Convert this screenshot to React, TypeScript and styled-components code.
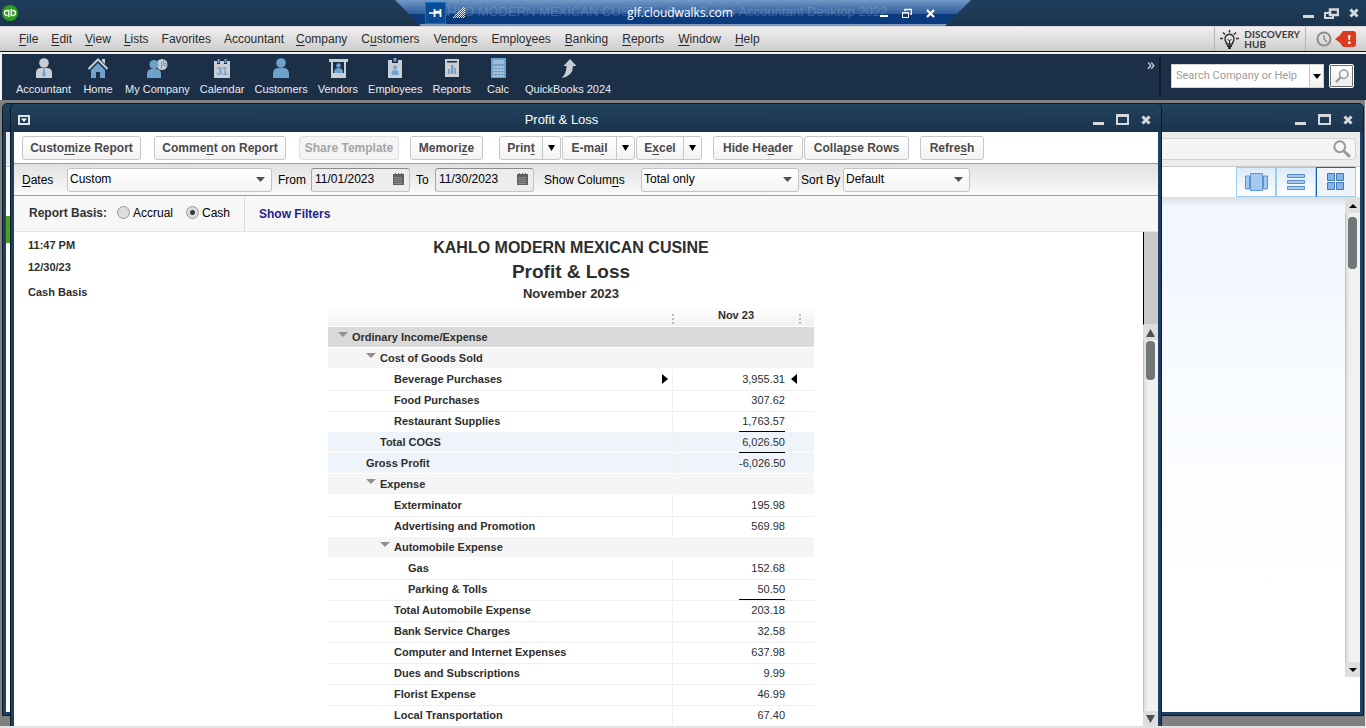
import React from "react";
import styled, { createGlobalStyle, css } from "styled-components";

const sans = '"Liberation Sans", Arial, sans-serif';
const ui = '"Open Sans", "Noto Sans", sans-serif';
const navy = "#1b2f47";
const frame = "#1f4064";
const titleGradient = "linear-gradient(#21425f, #1b344c)";

const GlobalStyle = createGlobalStyle`
  *, *::before, *::after { box-sizing: border-box; }
  body { margin: 0; background: #e3e3e3; font-family: ${sans}; font-size: 12px; color: #222; overflow: hidden; }
  button, input, select { font-family: inherit; font-size: inherit; color: inherit; margin: 0; }
  button { background: none; border: 0; padding: 0; cursor: pointer; }
  svg { display: block; flex: none; }
  u { text-decoration-skip-ink: none; text-underline-offset: 2px; text-decoration-thickness: 1px; }
`;

/* ---------- shell ---------- */

const Shell = styled.div`
  display: flex;
  flex-direction: column;
  height: 100vh;
  white-space: nowrap;
`;

const AppTitleBar = styled.header`
  position: relative;
  display: flex;
  align-items: center;
  justify-content: space-between;
  height: 26px;
  padding: 0 7px 0 2px;
  background: linear-gradient(#1f3f5f, #1b334b);
`;

const Controls = styled.div<{ $gap?: number }>`
  display: flex;
  align-items: center;
  gap: ${(p) => p.$gap ?? 10}px;
`;

const IconButton = styled.button`
  display: grid;
  place-items: center;
`;

const RemoteBar = styled.div`
  position: absolute;
  top: 0;
  left: 50%;
  width: 576px;
  height: 26px;
  margin-left: -288px;
  display: grid;
  grid-template-columns: 1fr auto 1fr;
  align-items: center;
  padding: 0 36px 0 30px;
  clip-path: polygon(0 0, 100% 0, calc(100% - 26px) 100%, 26px 100%);
  background: linear-gradient(#7299c8, #2d5c98 14px, #0c3b7c 14px, #0a3a80 24px, #8299bd 24px);
  color: #fff;
`;

const GhostTitle = styled.span`
  position: absolute;
  left: 35px;
  top: 2px;
  font-size: 13px;
  line-height: 20px;
  color: rgba(160, 190, 225, 0.32);
`;

const RemoteHost = styled.span`
  position: relative;
  font-family: ${ui};
  font-size: 12px;
  line-height: 24px;
`;

const RemoteGroup = styled.div<{ $end?: boolean; $gap: number }>`
  position: relative;
  display: flex;
  align-items: center;
  gap: ${(p) => p.$gap}px;
  justify-content: ${(p) => (p.$end ? "flex-end" : "flex-start")};
`;

const PinButton = styled(IconButton)`
  width: 21px;
  height: 22px;
  background: #0b4c97;
  border: 1px solid #1e6cc0;
`;

const MenuBar = styled.nav`
  display: flex;
  justify-content: space-between;
  height: 26px;
  background: linear-gradient(#f0f0f0, #cdcdcd);
  border-top: 1px solid #d8d8d8;
  border-bottom: 1px solid #111;
`;

const MenuList = styled.div`
  display: flex;
  gap: 12px;
  margin-left: 19px;
  line-height: 24px;
  color: #2b2b2b;
`;

const MenuGroup = styled.div<{ $gap: number }>`
  display: flex;
  gap: ${(p) => p.$gap}px;
`;

const MenuEnd = styled.div`
  display: flex;
  padding-right: 10px;
`;

const DiscoveryHub = styled.button`
  display: flex;
  align-items: center;
  gap: 5px;
  padding: 0 5px;
  border-left: 1px solid #b4b4b4;
  border-right: 1px solid #b4b4b4;
  font-family: Lato, ${sans};
  font-weight: 700;
  font-size: 10px;
  line-height: 10px;
  text-align: left;
  color: #3c3c3c;
`;

const Alerts = styled.div`
  display: flex;
  align-items: center;
  gap: 3px;
  padding-left: 10px;
`;

const IconBar = styled.div`
  display: flex;
  justify-content: space-between;
  height: 48px;
  background: ${navy};
  border-top: 2px solid #f4f4f4;
  border-left: 2px solid #f4f4f4;
`;

const Shortcuts = styled.div`
  display: flex;
  gap: 10px;
  margin-left: 14px;
`;

const Shortcut = styled.button`
  display: flex;
  flex-direction: column;
  align-items: center;
  gap: 3px;
  min-width: 34px;
  padding-top: 3px;
  font-size: 11px;
  line-height: 14px;
  color: #e8ecf0;
`;

const IconBarEnd = styled.div`
  display: flex;
  padding: 3px 12px 3px 0;
`;

const More = styled.button`
  align-self: flex-start;
  padding: 0 4px 0 0;
  font-family: ${ui};
  font-size: 16px;
  line-height: 14px;
  color: #dfe3e8;
`;

const SearchZone = styled.form`
  display: flex;
  align-items: center;
  gap: 5px;
  padding: 0 0 2px 10px;
  border-left: 2px solid #0e1c2e;
`;

const SearchBox = styled.div`
  display: flex;
  width: 153px;
  height: 24px;
  background: #fff;
  border: 1px solid #d6d2c8;
`;

const SearchInput = styled.input`
  flex: 1;
  min-width: 0;
  padding: 0 4px 2px;
  border: 0;
  background: none;
  font-family: Roboto, ${sans};
  font-size: 11px;
  &::placeholder { color: #9c9c9c; opacity: 1; }
`;

const SearchDrop = styled(IconButton)`
  width: 14px;
  border-left: 1px solid #c4c4c4;
  background: linear-gradient(#fff, #f1f1f1);
`;

const SearchGo = styled(IconButton)`
  width: 25px;
  height: 24px;
  background: linear-gradient(#fff, #ececec);
  border: 1px solid #fff;
  border-radius: 2px;
  box-shadow: inset 0 0 0 1px #6c6c6c;
`;

/* ---------- windows ---------- */

const Desktop = styled.main`
  position: relative;
  flex: 1;
  min-height: 0;
  background: #808080;
  border-right: 1px solid #e3e3e3;
  margin-bottom: 2px;
  overflow: hidden;
`;

const windowBase = css`
  position: absolute;
  top: 3px;
  display: flex;
  flex-direction: column;
  border: 1px solid #0b1a2b;
  border-radius: 5px 5px 0 0;
  background: ${frame};
`;

const BackWindow = styled.section`
  ${windowBase}
  left: 2px;
  right: 1px;
  bottom: 10px;
`;

const FrontWindow = styled.section`
  ${windowBase}
  left: 10px;
  right: 203px;
  bottom: 0;
  border-bottom: 0;
`;

const WindowTitle = styled.header`
  display: flex;
  align-items: center;
  height: 28px;
  padding: 3px 10px 0 7px;
  border-radius: 5px 5px 0 0;
  background: ${titleGradient};
  color: #fff;
  font-size: 13px;
`;

const WindowName = styled.span`
  flex: 1;
  text-align: center;
`;

const WindowBody = styled.div<{ $bottom?: number }>`
  display: flex;
  flex: 1;
  flex-direction: column;
  min-height: 0;
  margin: 0 3px ${(p) => p.$bottom ?? 0}px;
  background: #fff;
`;

/* back window */

const FindRow = styled.div`
  height: 35px;
  padding: 6px 4px;
  background: #ececec;
  border-bottom: 1px solid #c9c9c9;
`;

const FindBox = styled.label`
  display: flex;
  align-items: center;
  height: 22px;
  padding-right: 4px;
  background: #f5f5f5;
  border: 1px solid #d2d2d2;
  border-radius: 4px;
`;

const FindInput = styled.input`
  flex: 1;
  border: 0;
  background: none;
  outline: 0;
`;

const ViewRow = styled.div`
  display: flex;
  justify-content: flex-end;
  height: 30px;
  padding-right: 4px;
`;

const ViewButton = styled(IconButton)<{ $on?: boolean }>`
  width: 40px;
  border: 1px solid #9ccbee;
  background: linear-gradient(#dcebf9, #fdfeff);
  ${(p) =>
    p.$on &&
    css`
      border-left: 1px solid #1565b4;
      border-top: 1px solid #1565b4;
      background: #eef3f9;
    `}
`;

const BackContent = styled.div`
  display: flex;
  flex: 1;
  min-height: 0;
  background: linear-gradient(#dadde2, #f3f7fe 10px, #f3f7fe 60px, #f8fbff 190px, #fff 400px);
`;

const SideRail = styled.div`
  width: 40px;
  background: #fff;
  padding-top: 19px;
`;

const ActiveMarker = styled.div`
  height: 27px;
  background: #4da019;
`;

const BackScroll = styled.div`
  display: flex;
  flex-direction: column;
  width: 15px;
  margin: 1px 0 35px auto;
`;

const Track = styled.div`
  flex: 1;
  padding: 4px 2px;
  background: linear-gradient(90deg, #dcdcdc, #f1f1f1 4px);
  border-left: 1px solid #c2c2c2;
`;

const Thumb = styled.div<{ $h: number }>`
  height: ${(p) => p.$h}px;
  width: 9px;
  background: #707776;
  border-radius: 4px;
`;

const ScrollButton = styled(IconButton)`
  height: 15px;
  background: #dedede;
`;

/* report window */

const ButtonRow = styled.div`
  display: flex;
  align-items: center;
  height: 32px;
  padding-left: 8px;
  border-bottom: 1px solid #9c9c9c;
`;

const ButtonGroup = styled.div<{ $tight?: boolean }>`
  display: flex;
  gap: ${(p) => (p.$tight ? 1 : 13)}px;
  margin-right: 11px;
`;

const SplitGroup = styled(ButtonGroup)`
  margin-left: 5px;
`;

const buttonFace = css`
  height: 24px;
  border: 1px solid #c6c6c6;
  border-radius: 3px;
  background: linear-gradient(#fff, #f2f2f2);
  font-weight: 700;
  color: #4a4a4a;
`;

const ToolButton = styled.button<{ $w: number }>`
  ${buttonFace}
  width: ${(p) => p.$w}px;
  &:disabled { color: #a6a6a6; border-color: #e0e0e0; background: #f4f4f4; }
`;

const SplitButton = styled.div<{ $w: number }>`
  ${buttonFace}
  display: flex;
  width: ${(p) => p.$w}px;
`;

const SplitMain = styled.button`
  flex: 1;
  font-weight: 700;
`;

const SplitDrop = styled(IconButton)`
  width: 18px;
  border-left: 1px solid #c6c6c6;
`;

const FilterRow = styled.form`
  display: flex;
  align-items: center;
  height: 32px;
  padding-left: 8px;
  background: linear-gradient(#e2e2e2, #f9f9f9);
  border-bottom: 1px solid #9c9c9c;
  color: #000;
`;

const FieldLabel = styled.label<{ $w: number; $before?: number }>`
  width: ${(p) => p.$w}px;
  margin-left: ${(p) => p.$before ?? 0}px;
`;

const SelectBox = styled.div<{ $w: number }>`
  position: relative;
  width: ${(p) => p.$w}px;
  height: 24px;
  svg { position: absolute; right: 7px; top: 9px; pointer-events: none; }
`;

const Select = styled.select`
  appearance: none;
  width: 100%;
  height: 100%;
  padding: 0 20px 2px 2px;
  border: 1px solid #c3c3c3;
  border-radius: 3px;
  background: linear-gradient(#fff, #f4f4f4);
`;

const DateBox = styled.div`
  display: flex;
  align-items: center;
  width: 99px;
  height: 24px;
  padding: 0 5px 2px 0;
  border: 1px solid #c3c3c3;
  border-top-color: #8c8c8c;
  border-left-color: #a5a5a5;
  border-radius: 3px;
  background: #ededed;
`;

const DateInput = styled.input`
  flex: 1;
  min-width: 0;
  padding: 0 3px;
  border: 0;
  background: none;
`;

const BasisRow = styled.div`
  display: flex;
  height: 36px;
  background: #f7f7f7;
  border-bottom: 1px solid #e4e4e4;
`;

const Basis = styled.fieldset`
  display: flex;
  align-items: center;
  width: 231px;
  margin: 0;
  padding: 0 0 2px 15px;
  border: 0;
  border-right: 1px solid #dcdcdc;
  color: #000;
`;

const BasisName = styled.span`
  width: 88px;
  font-weight: 700;
  color: #333;
`;

const RadioLabel = styled.label`
  display: flex;
  align-items: center;
  gap: 3px;
  margin-right: 13px;
`;

const Radio = styled.input`
  appearance: none;
  width: 13px;
  height: 13px;
  margin: 0;
  border: 1px solid #9b9b9b;
  border-radius: 50%;
  background: #dcdcdc;
  &:checked { background: radial-gradient(#3a3a3a 2px, #dcdcdc 3px); }
`;

const FilterLink = styled.a`
  margin-left: 14px;
  line-height: 36px;
  font-weight: 700;
  color: #1d1f8c;
  text-decoration: none;
`;

const ReportArea = styled.div`
  display: flex;
  flex: 1;
  min-height: 0;
`;

const ReportView = styled.div`
  display: flex;
  flex: 1;
  min-height: 0;
  overflow: hidden;
  color: #2e2e2e;
`;

const Meta = styled.div`
  width: 314px;
  flex: none;
  padding: 2px 14px;
  font-size: 11px;
  font-weight: 700;
  line-height: 22px;
`;

const MetaLine = styled.div`
  &:last-child { margin-top: 3px; }
`;

const Report = styled.article`
  width: 486px;
  padding-top: 5px;
  text-align: center;
`;

const Heading = styled.h1<{ $size: number; $line: number }>`
  margin: 0;
  font-size: ${(p) => p.$size}px;
  line-height: ${(p) => p.$line}px;
  font-weight: 700;
`;

const Ledger = styled.table`
  width: 100%;
  margin-top: 3px;
  border-collapse: separate;
  border-spacing: 0;
  table-layout: fixed;
  font-size: 11px;
`;

const HeadCell = styled.th`
  position: relative;
  height: 21px;
  padding: 0 15px 3px 0;
  background: linear-gradient(#fff, #f1f1f1);
  border-bottom: 1px solid #fff;
`;

const Grip = styled.i<{ $right: number }>`
  position: absolute;
  z-index: 1;
  right: ${(p) => p.$right}px;
  bottom: 2px;
  width: 2px;
  height: 10px;
  background: repeating-linear-gradient(#bdbdbd 0 2px, transparent 2px 4px);
`;

type Tone = "section" | "group" | "total" | "plain";

const fills: Record<Tone, string> = {
  section: "#dadada",
  group: "#f5f5f5",
  total: "#eef4f9",
  plain: "#ffffff",
};

const Row = styled.tr<{ $tone: Tone; $divided: boolean }>`
  > * {
    height: 21px;
    padding: 0;
    background: ${(p) => fills[p.$tone]};
    background-clip: padding-box;
    border-bottom: 1px solid #fff;
    ${(p) =>
      p.$divided &&
      css`
        background-image: linear-gradient(#efefef 1px, transparent 1px);
      `}
  }
`;

const NameCell = styled.th<{ $level: number; $line: boolean }>`
  position: relative;
  text-align: left;
  text-indent: ${(p) => 24 + 14 * p.$level}px;
  border-right: ${(p) => (p.$line ? "1px solid #f0f0f0" : "0")};
`;

const ToggleButton = styled(IconButton)<{ $level: number }>`
  position: absolute;
  left: ${(p) => 10 + 14 * p.$level}px;
  top: 5px;
`;

const ValueCell = styled.td`
  position: relative;
  text-align: right;
`;

const Amount = styled.span<{ $rule?: boolean }>`
  display: block;
  width: 46px;
  height: 21px;
  margin: 0 29px -1px auto;
  line-height: 20px;
  border-bottom: ${(p) => (p.$rule ? "1px solid #000" : "0")};
`;

const Marker = styled.span<{ $right: number }>`
  position: absolute;
  right: ${(p) => p.$right}px;
  top: 5px;
`;

const ReportScroll = styled.div`
  display: flex;
  flex-direction: column;
  width: 15px;
`;

const ScrollCap = styled.div`
  height: 93px;
  background: #c9c9c9;
  border-left: 1px solid #000;
  border-bottom: 1px solid #ddd;
`;

const ReportTrack = styled(Track)`
  padding-top: 1px;
`;

/* ---------- drawings ---------- */

const light = "#c9ced5";
const blue = "#6fa1cd";

const icons: Record<string, React.ReactNode> = {
  Accountant: (
    <>
      <circle cx="11" cy="6" r="4.800" fill={light} />
      <path d="M3 21v-5q0-5 5-5h6q5 0 5 5v5z" fill={light} />
      <path d="M10 11h2l-.4 2 1.200 5-1.800 2-1.800-2 1.200-5z" fill={blue} />
    </>
  ),
  Home: (
    <>
      <path d="M4 13l7-7 7 7v8h-5v-6H9v6H4z" fill={blue} />
      <path d="M1.500 12L11 2.500 20.500 12" fill="none" stroke={light} strokeWidth="2" />
      <path d="M15 2h3v5l-3-3z" fill={light} />
    </>
  ),
  "My Company": (
    <>
      <circle cx="16" cy="7.500" r="5.500" fill={light} />
      <g fill="none" stroke={blue} strokeWidth="1.200">
        <path d="M15.500 4.500v7M17.500 3v6" />
        <circle cx="19" cy="7.500" r="1.500" />
      </g>
      <circle cx="8" cy="7.500" r="4.500" fill={blue} />
      <path d="M1 21v-4q0-5 5-5h4q5 0 5 5v4z" fill={blue} />
    </>
  ),
  Calendar: (
    <>
      <path d="M3 4h3v3h3V4h4v3h3V4h3v17H3z" fill={light} />
      <path d="M6.500 2h2v4h-2zM13.500 2h2v4h-2z" fill={blue} />
      <text x="11" y="18" textAnchor="middle" fontSize="10" fontWeight="700" fontFamily="Liberation Sans" fill={blue}>31</text>
    </>
  ),
  Customers: (
    <>
      <circle cx="11" cy="6" r="4.800" fill={blue} />
      <path d="M3 21v-4q0-6 5-6h6q5 0 5 6v4z" fill={blue} />
    </>
  ),
  Vendors: (
    <>
      <path d="M2 2h19v3h-2v16H4V5H2z" fill={light} />
      <path d="M6 5h11v11H6z" fill={navy} />
      <circle cx="11.500" cy="8.500" r="2.300" fill={blue} />
      <path d="M7 16q0-5 4.500-5t4.500 5z" fill={blue} />
    </>
  ),
  Employees: (
    <>
      <path d="M4 3h14v18H4z" fill={light} />
      <path d="M8 2h6v4H8z" fill={navy} />
      <path d="M9.500 1h3v3.500h-3z" fill={blue} />
      <circle cx="11" cy="10.500" r="2" fill={blue} />
      <path d="M7.500 18v-2q0-3 3.500-3t3.500 3v2z" fill={blue} />
    </>
  ),
  Reports: (
    <>
      <path d="M4 2h14v18H4z" fill={light} />
      <path d="M6 4h10v1.500H6z" fill={navy} />
      <path d="M7 12h2v5H7zM10 8h2.500v9H10zM13.500 11H15v6h-1.500z" fill={blue} />
    </>
  ),
  Calc: (
    <>
      <path d="M4 1h15v20H4z" fill={blue} />
      <path d="M6 3h11v4H6z" fill="#9fbdd9" />
      <path d="M6 10h11M6 13h11M6 16h11M6 19h11" stroke={light} strokeWidth="1.500" strokeDasharray="2.500 .7" />
    </>
  ),
  "QuickBooks 2024": (
    <path d="M13 2l6.500 7H16q0 10-11.500 12 5-4 5-12H6.500z" fill={light} />
  ),
};

const ShortcutIcon = ({ name }: { name: string }) => (
  <svg width="22" height="22" viewBox="0 0 22 22">{icons[name]}</svg>
);

const MinIcon = () => (
  <svg width="11" height="12"><path d="M0 8h11v3H0z" fill="#d5d9dd" /></svg>
);
const MaxIcon = () => (
  <svg width="13" height="11"><path d="M1 2h11v8H1z" fill="none" stroke="#d5d9dd" strokeWidth="2" /><path d="M0 0h13v3H0z" fill="#d5d9dd" /></svg>
);
const RestoreIcon = () => (
  <svg width="15" height="11" fill="none" stroke="#d5d9dd" strokeWidth="2"><path d="M6 1.500h8V7H6z" strokeWidth="2.500" /><path d="M6 5H1v5h8V8" /></svg>
);
const CloseIcon = () => (
  <svg width="10" height="10"><path d="M1.500 1.500l7 7M8.500 1.500l-7 7" stroke="#d5d9dd" strokeWidth="3" /></svg>
);
const SmallRestore = () => (
  <svg width="10" height="10" fill="none" stroke="#fff"><path d="M3 3V1.500h6.500V6H8" strokeWidth="1.500" /><path d="M.5 4.500h6v5h-6zM.5 5h6" /></svg>
);
const Caret = ({ w = 9, h = 5, up = false, color = "#000" }) => (
  <svg width={w} height={h}><path d={up ? `M0 ${h}h${w}L${w / 2} 0z` : `M0 0h${w}L${w / 2} ${h}z`} fill={color} /></svg>
);

const QbLogo = () => (
  <svg width="16" height="16" viewBox="0 0 16 16">
    <circle cx="8" cy="8" r="8" fill="#2ca01c" />
    <g fill="none" stroke="#fff" strokeWidth="1.300">
      <path d="M6.800 12V5.500H5a2.300 2.300 0 0 0 0 5h.7M9.200 4v6.500H11a2.300 2.300 0 0 0 0-5h-.7" />
    </g>
  </svg>
);

const PinIcon = () => (
  <svg width="13" height="10"><path d="M0 5h5M5.500 1v8M6 5h6M11.500 1v8M6 3.500h5" stroke="#fff" strokeWidth="1.700" /></svg>
);

const SignalIcon = () => (
  <svg width="12" height="12" stroke="#dfe8f4" fill="none" strokeDasharray="1 1">
    <path d="M10 .5h2M9 1.500h3M8 2.500h4M7 3.500h5M6 4.500h6M5 5.500h7M4 6.500h8M3 7.500h9M2 8.500h10M1 9.500h11M0 10.500h12" />
  </svg>
);

const BulbIcon = () => (
  <svg width="19" height="19" viewBox="0 0 19 19" fill="none" stroke="#333" strokeWidth="1.500">
    <path d="M6.500 14q0-2-1.200-3.200A4.600 4.600 0 1 1 13.700 10.800Q12.500 12 12.500 14z" />
    <path d="M7 16h5M8 18h3" strokeWidth="2" />
    <path d="M9.500 14v-4M7.500 9l2 2 2-2" strokeWidth="1" />
    <path d="M9.500 0v2.500M3 2.500l2 2M16 2.500l-2 2M0 8.500h3M16 8.500h3" />
  </svg>
);

const ClockIcon = () => (
  <svg width="16" height="16" fill="none" stroke="#8c8c8c"><circle cx="8" cy="8" r="6.500" strokeWidth="2" /><path d="M8 4v4l3 3" strokeWidth="1.500" /></svg>
);

const AlertIcon = () => (
  <svg width="21" height="16"><path d="M0 8q5-3 8-8h10q3 0 3 3v10q0 3-3 3H8Q5 11 0 8z" fill="#dc3b1f" /><path d="M13 4h2.500l-.5 5h-1.500zM13 10.500h2.500V13H13z" fill="#fff" /></svg>
);

const Lens = ({ size = 16, flip = false, color = "#9a9a9a" }) => (
  <svg width={size} height={size} viewBox="0 0 16 16" fill="none" stroke={color}>
    <g transform={flip ? "matrix(-1 0 0 1 16 0)" : undefined}>
      <circle cx="6" cy="6" r="4.800" strokeWidth="1.800" />
      <path d="M9.500 9.500l5.500 5.500" strokeWidth="2.600" />
    </g>
  </svg>
);

const WindowMenuIcon = () => (
  <svg width="12" height="10"><path d="M1 1h10v8H1z" fill="none" stroke="#dfe3e6" strokeWidth="2" /><path d="M3 3.500h6L6 7z" fill="#fff" /></svg>
);

const CalendarGlyph = () => (
  <svg width="11" height="12"><path d="M0 1h11v11H0z" fill="#606060" /><path d="M1.500 4.500h8M1.500 6.500h8M1.500 8.500h8M1.500 10.500h8" stroke="#d0d0d0" strokeDasharray="1 1" strokeWidth=".8" /><path d="M2 0h1v2H2zM5 0h1v2H5zM8 0h1v2H8z" fill="#606060" /></svg>
);

const CarouselIcon = () => (
  <svg width="23" height="19" fill="#a6c8ee" stroke="#5d95cf"><path d="M.5 3h4v13h-4zM18.500 3h4v13h-4zM5.500.5h12v17h-12z" /></svg>
);
const ListIcon = () => (
  <svg width="18" height="18" fill="#a6c8ee" stroke="#5a8fc8"><path d="M.5 1.500h17v3H.5zM.5 7.500h17v3H.5zM.5 13.500h17v3H.5z" /></svg>
);
const GridIcon = () => (
  <svg width="18" height="18" fill="#86b4e6" stroke="#3f7ab8"><path d="M.5.500h7v7h-7zM9.500.5h7v7h-7zM.5 9.500h7v7h-7zM9.500 9.500h7v7h-7z" /></svg>
);

const SideArrow = ({ left = false }) => (
  <svg width="6" height="10"><path d={left ? "M6 0v10L0 5z" : "M0 0v10l6-5z"} fill="#000" /></svg>
);

/* ---------- content ---------- */

// The letter after "~" is the keyboard mnemonic and is underlined.
const Mnemonic = ({ text }: { text: string }) => {
  const at = text.indexOf("~");
  if (at < 0) return <>{text}</>;
  return <>{text.slice(0, at)}<u>{text[at + 1]}</u>{text.slice(at + 2)}</>;
};

const generalMenus = ["~File", "~Edit", "~View", "~Lists", "Favorites", "Accountant"];
const centerMenus = ["~Company", "C~ustomers", "Vend~ors", "Emplo~yees", "~Banking", "~Reports", "~Window", "~Help"];

interface Line {
  name: string;
  level: number;
  tone?: Tone;
  amount?: string;
  rule?: boolean;
  toggle?: boolean;
  marked?: boolean;
}

const lines: Line[] = [
  { name: "Ordinary Income/Expense", level: 0, tone: "section", toggle: true },
  { name: "Cost of Goods Sold", level: 2, tone: "group", toggle: true },
  { name: "Beverage Purchases", level: 3, amount: "3,955.31", marked: true },
  { name: "Food Purchases", level: 3, amount: "307.62" },
  { name: "Restaurant Supplies", level: 3, amount: "1,763.57", rule: true },
  { name: "Total COGS", level: 2, tone: "total", amount: "6,026.50", rule: true },
  { name: "Gross Profit", level: 1, tone: "total", amount: "-6,026.50" },
  { name: "Expense", level: 2, tone: "group", toggle: true },
  { name: "Exterminator", level: 3, amount: "195.98" },
  { name: "Advertising and Promotion", level: 3, amount: "569.98" },
  { name: "Automobile Expense", level: 3, tone: "group", toggle: true },
  { name: "Gas", level: 4, amount: "152.68" },
  { name: "Parking & Tolls", level: 4, amount: "50.50", rule: true },
  { name: "Total Automobile Expense", level: 3, amount: "203.18" },
  { name: "Bank Service Charges", level: 3, amount: "32.58" },
  { name: "Computer and Internet Expenses", level: 3, amount: "637.98" },
  { name: "Dues and Subscriptions", level: 3, amount: "9.99" },
  { name: "Florist Expense", level: 3, amount: "46.99" },
  { name: "Local Transportation", level: 3, amount: "67.40" },
];

// A hairline divides two neighbouring rows that have no fill.
const isDivided = (i: number) => i > 0 && !lines[i].tone && !lines[i - 1].tone;

const WindowControls = () => (
  <Controls $gap={12}>
    <IconButton aria-label="Minimize"><MinIcon /></IconButton>
    <IconButton aria-label="Maximize"><MaxIcon /></IconButton>
    <IconButton aria-label="Close"><CloseIcon /></IconButton>
  </Controls>
);

const Menus = ({ items, gap }: { items: string[]; gap: number }) => (
  <MenuGroup $gap={gap}>
    {items.map((m) => <button key={m}><Mnemonic text={m} /></button>)}
  </MenuGroup>
);

const Split = ({ text, w }: { text: string; w: number }) => (
  <SplitButton $w={w}>
    <SplitMain><Mnemonic text={text} /></SplitMain>
    <SplitDrop aria-label="More options"><Caret w={7} h={6} /></SplitDrop>
  </SplitButton>
);

const Picker = ({ id, value, w }: { id: string; value: string; w: number }) => (
  <SelectBox $w={w}>
    <Select id={id} defaultValue={value}><option>{value}</option></Select>
    <Caret color="#505050" />
  </SelectBox>
);

const DateField = ({ id, value }: { id: string; value: string }) => (
  <DateBox>
    <DateInput id={id} defaultValue={value} />
    <IconButton type="button" aria-label="Pick a date"><CalendarGlyph /></IconButton>
  </DateBox>
);

export default function App() {
  return (
    <Shell>
      <GlobalStyle />
      <AppTitleBar>
        <QbLogo />
        <RemoteBar>
          <GhostTitle>KAHLO MODERN MEXICAN CUSINE&nbsp; - QuickBooks Accountant Desktop 2022</GhostTitle>
          <RemoteGroup $gap={7}>
            <PinButton aria-label="Pin"><PinIcon /></PinButton>
            <SignalIcon />
          </RemoteGroup>
          <RemoteHost>glf.cloudwalks.com</RemoteHost>
          <RemoteGroup $end $gap={14}>
            <IconButton aria-label="Minimize"><svg width="8" height="10"><path d="M0 7h8v2H0z" fill="#fff" /></svg></IconButton>
            <IconButton aria-label="Restore"><SmallRestore /></IconButton>
            <IconButton aria-label="Disconnect"><svg width="9" height="9"><path d="M1 1l7 7M8 1L1 8" stroke="#fff" strokeWidth="2.200" /></svg></IconButton>
          </RemoteGroup>
        </RemoteBar>
        <Controls>
          <IconButton aria-label="Minimize"><MinIcon /></IconButton>
          <IconButton aria-label="Restore"><RestoreIcon /></IconButton>
          <IconButton aria-label="Close"><CloseIcon /></IconButton>
        </Controls>
      </AppTitleBar>

      <MenuBar>
        <MenuList>
          <Menus items={generalMenus} gap={13} />
          <Menus items={centerMenus} gap={14} />
        </MenuList>
        <MenuEnd>
          <DiscoveryHub><BulbIcon /><span>DISCOVERY<br />HUB</span></DiscoveryHub>
          <Alerts>
            <IconButton aria-label="Reminders"><ClockIcon /></IconButton>
            <IconButton aria-label="Alerts"><AlertIcon /></IconButton>
          </Alerts>
        </MenuEnd>
      </MenuBar>

      <IconBar>
        <Shortcuts>
          {Object.keys(icons).map((name) => (
            <Shortcut key={name}><ShortcutIcon name={name} />{name}</Shortcut>
          ))}
        </Shortcuts>
        <IconBarEnd>
          <More aria-label="More shortcuts">»</More>
          <SearchZone>
            <SearchBox>
              <SearchInput aria-label="Search" placeholder="Search Company or Help" />
              <SearchDrop type="button" aria-label="Search scope"><Caret w={8} h={5} /></SearchDrop>
            </SearchBox>
            <SearchGo type="button" aria-label="Go"><Lens size={14} flip /></SearchGo>
          </SearchZone>
        </IconBarEnd>
      </IconBar>

      <Desktop>
        <BackWindow>
          <WindowTitle><WindowName /><WindowControls /></WindowTitle>
          <WindowBody $bottom={3}>
            <FindRow>
              <FindBox><FindInput aria-label="Find" /><Lens size={18} /></FindBox>
            </FindRow>
            <ViewRow>
              <ViewButton aria-label="Carousel view"><CarouselIcon /></ViewButton>
              <ViewButton aria-label="List view"><ListIcon /></ViewButton>
              <ViewButton aria-label="Grid view" $on><GridIcon /></ViewButton>
            </ViewRow>
            <BackContent>
              <SideRail><ActiveMarker /></SideRail>
              <BackScroll>
                <ScrollButton aria-label="Scroll up"><Caret w={8} h={4} up /></ScrollButton>
                <Track><Thumb $h={52} /></Track>
                <ScrollButton aria-label="Scroll down"><Caret w={8} h={4} /></ScrollButton>
              </BackScroll>
            </BackContent>
          </WindowBody>
        </BackWindow>

        <FrontWindow>
          <WindowTitle>
            <IconButton aria-label="Window menu"><WindowMenuIcon /></IconButton>
            <WindowName>Profit &amp; Loss</WindowName>
            <WindowControls />
          </WindowTitle>
          <WindowBody>
            <ButtonRow>
              <ButtonGroup>
                <ToolButton $w={119}><Mnemonic text="Custo~mize Report" /></ToolButton>
                <ToolButton $w={132}><Mnemonic text="Comme~nt on Report" /></ToolButton>
                <ToolButton $w={100} disabled>Share Template</ToolButton>
              </ButtonGroup>
              <ButtonGroup>
                <ToolButton $w={73}><Mnemonic text="Memori~ze" /></ToolButton>
              </ButtonGroup>
              <SplitGroup $tight>
                <Split text="Prin~t" w={62} />
                <Split text="E-ma~il" w={73} />
                <Split text="E~xcel" w={66} />
              </SplitGroup>
              <ButtonGroup $tight>
                <ToolButton $w={90}><Mnemonic text="Hide He~ader" /></ToolButton>
                <ToolButton $w={105}><Mnemonic text="Colla~pse Rows" /></ToolButton>
              </ButtonGroup>
              <ToolButton $w={64}><Mnemonic text="Refre~sh" /></ToolButton>
            </ButtonRow>

            <FilterRow>
              <FieldLabel htmlFor="dates" $w={45}><Mnemonic text="~Dates" /></FieldLabel>
              <Picker id="dates" value="Custom" w={205} />
              <FieldLabel htmlFor="from" $w={33} $before={6}>From</FieldLabel>
              <DateField id="from" value="11/01/2023" />
              <FieldLabel htmlFor="to" $w={19} $before={6}>To</FieldLabel>
              <DateField id="to" value="11/30/2023" />
              <FieldLabel htmlFor="columns" $w={97} $before={10}><Mnemonic text="Show Colum~ns" /></FieldLabel>
              <Picker id="columns" value="Total only" w={158} />
              <FieldLabel htmlFor="sort" $w={42} $before={2}>Sort By</FieldLabel>
              <Picker id="sort" value="Default" w={127} />
            </FilterRow>

            <BasisRow>
              <Basis>
                <BasisName>Report Basis:</BasisName>
                <RadioLabel><Radio type="radio" name="basis" />Accrual</RadioLabel>
                <RadioLabel><Radio type="radio" name="basis" defaultChecked />Cash</RadioLabel>
              </Basis>
              <FilterLink href="#filters">Show Filters</FilterLink>
            </BasisRow>

            <ReportArea>
              <ReportView>
                <Meta>
                  <MetaLine>11:47 PM</MetaLine>
                  <MetaLine>12/30/23</MetaLine>
                  <MetaLine>Cash Basis</MetaLine>
                </Meta>
                <Report>
                  <Heading $size={16} $line={22}>KAHLO MODERN MEXICAN CUSINE</Heading>
                  <Heading as="h2" $size={19} $line={26}>Profit &amp; Loss</Heading>
                  <Heading as="h3" $size={13} $line={18}>November 2023</Heading>
                  <Ledger>
                    <colgroup><col /><col width="141" /></colgroup>
                    <thead>
                      <tr>
                        <HeadCell aria-label="Account"><Grip $right={-1} /></HeadCell>
                        <HeadCell>Nov 23<Grip $right={13} /></HeadCell>
                      </tr>
                    </thead>
                    <tbody>
                      {lines.map((l, i) => (
                        <Row key={l.name} $tone={l.tone ?? "plain"} $divided={isDivided(i)}>
                          <NameCell scope="row" $level={l.level} $line={!!l.amount}>
                            {l.toggle && (
                              <ToggleButton $level={l.level} aria-label="Collapse"><Caret w={10} h={5} color="#8f8f8f" /></ToggleButton>
                            )}
                            {l.name}
                            {l.marked && <Marker $right={4}><SideArrow /></Marker>}
                          </NameCell>
                          <ValueCell>
                            {l.amount && <Amount $rule={l.rule}>{l.amount}</Amount>}
                            {l.marked && <Marker $right={17}><SideArrow left /></Marker>}
                          </ValueCell>
                        </Row>
                      ))}
                    </tbody>
                  </Ledger>
                </Report>
              </ReportView>
              <ReportScroll>
                <ScrollCap />
                <ScrollButton aria-label="Scroll up"><Caret w={9} h={8} up color="#505050" /></ScrollButton>
                <ReportTrack><Thumb $h={39} /></ReportTrack>
                <ScrollButton aria-label="Scroll down"><Caret w={9} h={8} color="#505050" /></ScrollButton>
              </ReportScroll>
            </ReportArea>
          </WindowBody>
        </FrontWindow>
      </Desktop>
    </Shell>
  );
}
